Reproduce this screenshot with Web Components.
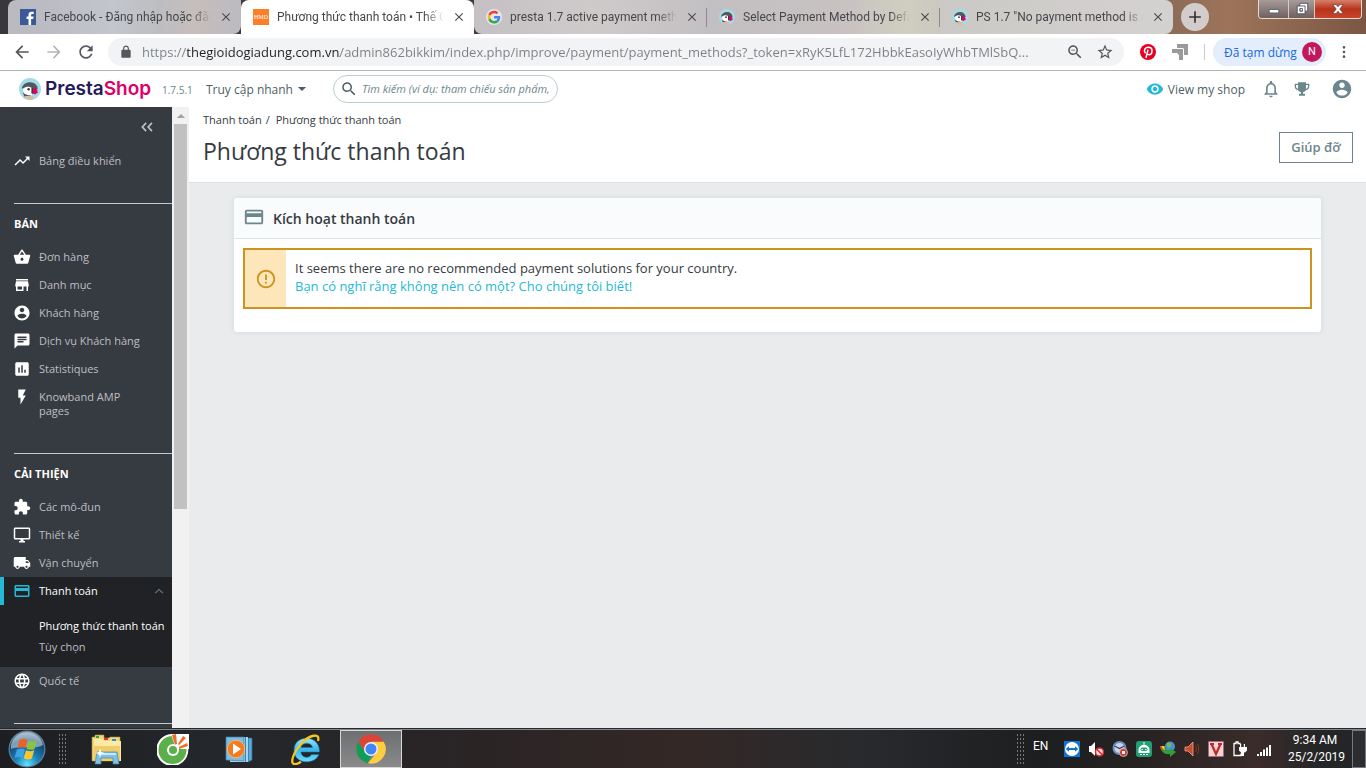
<!DOCTYPE html>
<html lang="vi">
<head>
<meta charset="utf-8">
<title>Phương thức thanh toán • Thế Giới Đồ Gia Dụng</title>
<style>
html, body { height: 100%; margin: 0; }
body { font-family: "Open Sans", "Noto Sans", sans-serif; overflow: hidden; background: #e9ebec; }
</style>
</head>
<body>
<desktop-screen></desktop-screen>
<script>
const P = {
  trend: 'M16 6l2.29 2.29-4.88 4.88-4-4L2 16.59 3.41 18l6-6 4 4 6.3-6.29L22 12V6z',
  basket: 'M17.21 9l-4.38-6.56c-.19-.28-.51-.42-.83-.42-.32 0-.64.14-.83.43L6.79 9H2c-.55 0-1 .45-1 1 0 .09.01.18.04.27l2.54 9.27c.23.84 1 1.46 1.92 1.46h13c.92 0 1.69-.62 1.93-1.46l2.54-9.27L23 10c0-.55-.45-1-1-1h-4.79zM9 9l3-4.4L15 9H9zm3 8c-1.1 0-2-.9-2-2s.9-2 2-2 2 .9 2 2-.9 2-2 2z',
  store: 'M20 4H4v2h16V4zm1 10v-2l-1-5H4l-1 5v2h1v6h10v-6h4v6h2v-6h1zm-9 4H6v-4h6v4z',
  account: 'M12 2C6.48 2 2 6.48 2 12s4.48 10 10 10 10-4.48 10-10S17.52 2 12 2zm0 3c1.66 0 3 1.34 3 3s-1.34 3-3 3-3-1.34-3-3 1.34-3 3-3zm0 14.2c-2.5 0-4.71-1.28-6-3.22.03-1.99 4-3.08 6-3.08 1.99 0 5.97 1.09 6 3.08-1.29 1.94-3.5 3.22-6 3.22z',
  chat: 'M20 2H4c-1.1 0-1.99.9-1.99 2L2 22l4-4h14c1.1 0 2-.9 2-2V4c0-1.1-.9-2-2-2zM6 9h12v2H6V9zm8 5H6v-2h8v2zm4-6H6V6h12v2z',
  stats: 'M19 3H5c-1.1 0-2 .9-2 2v14c0 1.1.9 2 2 2h14c1.1 0 2-.9 2-2V5c0-1.1-.9-2-2-2zM9 17H7v-7h2v7zm4 0h-2V7h2v10zm4 0h-2v-4h2v4z',
  flash: 'M7 2v11h3v9l7-12h-4l4-8z',
  extension: 'M20.5 11H19V7c0-1.1-.9-2-2-2h-4V3.5C13 2.12 11.88 1 10.5 1S8 2.12 8 3.5V5H4c-1.1 0-1.99.9-1.99 2v3.8H3.5c1.49 0 2.7 1.21 2.7 2.7s-1.21 2.7-2.7 2.7H2V20c0 1.1.9 2 2 2h3.8v-1.5c0-1.49 1.21-2.7 2.7-2.7 1.49 0 2.7 1.21 2.7 2.7V22H17c1.1 0 2-.9 2-2v-4h1.5c1.38 0 2.5-1.12 2.5-2.5S21.88 11 20.5 11z',
  desktop: 'M21 2H3c-1.1 0-2 .9-2 2v12c0 1.1.9 2 2 2h7v2H8v2h8v-2h-2v-2h7c1.1 0 2-.9 2-2V4c0-1.1-.9-2-2-2zm0 14H3V4h18v12z',
  truck: 'M20 8h-3V4H3c-1.1 0-2 .9-2 2v11h2c0 1.66 1.34 3 3 3s3-1.34 3-3h6c0 1.66 1.34 3 3 3s3-1.34 3-3h2v-5l-3-4zM6 18.5c-.83 0-1.5-.67-1.5-1.5s.67-1.5 1.5-1.5 1.5.67 1.5 1.5-.67 1.5-1.5 1.5zm13.5-9l1.96 2.5H17V9.5h2.5zm-1.5 9c-.83 0-1.5-.67-1.5-1.5s.67-1.5 1.5-1.5 1.5.67 1.5 1.5-.67 1.5-1.5 1.5z',
  payment: 'M20 4H4c-1.11 0-1.99.89-1.99 2L2 18c0 1.11.89 2 2 2h16c1.11 0 2-.89 2-2V6c0-1.11-.89-2-2-2zm0 14H4v-6h16v6zm0-10H4V6h16v2z',
  globe: 'M11.99 2C6.47 2 2 6.48 2 12s4.47 10 9.99 10C17.52 22 22 17.52 22 12S17.52 2 11.99 2zm6.93 6h-2.95c-.32-1.25-.78-2.45-1.38-3.56 1.84.63 3.37 1.91 4.33 3.56zM12 4.04c.83 1.2 1.48 2.53 1.91 3.96h-3.82c.43-1.43 1.08-2.76 1.91-3.96zM4.26 14C4.1 13.36 4 12.69 4 12s.1-1.36.26-2h3.38c-.08.66-.14 1.32-.14 2 0 .68.06 1.34.14 2H4.26zm.82 2h2.95c.32 1.25.78 2.45 1.38 3.56-1.84-.63-3.37-1.9-4.33-3.56zm2.95-8H5.08c.96-1.66 2.49-2.93 4.33-3.56C8.81 5.55 8.35 6.75 8.03 8zM12 19.96c-.83-1.2-1.48-2.53-1.91-3.96h3.82c-.43 1.43-1.08 2.76-1.91 3.96zM14.34 14H9.66c-.09-.66-.16-1.32-.16-2 0-.68.07-1.35.16-2h4.68c.09.65.16 1.32.16 2 0 .68-.07 1.34-.16 2zm.25 5.56c.6-1.11 1.06-2.31 1.38-3.56h2.95c-.96 1.65-2.49 2.93-4.33 3.56zM16.36 14c.08-.66.14-1.32.14-2 0-.68-.06-1.34-.14-2h3.38c.16.64.26 1.31.26 2s-.1 1.36-.26 2h-3.38z',
  alert: 'M11 15h2v2h-2zm0-8h2v6h-2zm.99-5C6.47 2 2 6.48 2 12s4.47 10 9.99 10C17.52 22 22 17.52 22 12S17.52 2 11.99 2zM12 20c-4.42 0-8-3.58-8-8s3.58-8 8-8 8 3.58 8 8-3.58 8-8 8z',
  eye: 'M12 4.5C7 4.5 2.73 7.61 1 12c1.73 4.39 6 7.5 11 7.5s9.27-3.11 11-7.5c-1.73-4.39-6-7.5-11-7.5zM12 17c-2.76 0-5-2.24-5-5s2.24-5 5-5 5 2.24 5 5-2.24 5-5 5zm0-8c-1.66 0-3 1.34-3 3s1.34 3 3 3 3-1.34 3-3-1.34-3-3-3z',
  bell: 'M12 22c1.1 0 2-.9 2-2h-4c0 1.1.9 2 2 2zm6-6v-5c0-3.07-1.63-5.64-4.5-6.32V4c0-.83-.67-1.5-1.5-1.5s-1.5.67-1.5 1.5v.68C7.64 5.36 6 7.92 6 11v5l-2 2v1h16v-1l-2-2zm-2 1H8v-6c0-2.48 1.51-4.5 4-4.5s4 2.02 4 4.5v6z',
  trophy: 'M6 2h12v2h5v4c0 3.200-2 5.500-5.200 5.900-.9 1.700-2.500 2.700-4.300 3V19h3v3H7.500v-3h3v-2.100c-1.800-.3-3.400-1.300-4.300-3C3 13.500 1 11.200 1 8V4h5zm0 4H3v2c0 1.700.9 3 2.400 3.600L6 11.700zm12 0v5.700l.6-.1C20.100 11 21 9.700 21 8V6z',
  back: 'M20 11H7.83l5.59-5.59L12 4l-8 8 8 8 1.41-1.41L7.83 13H20v-2z',
  forward: 'M12 4l-1.41 1.41L16.17 11H4v2h12.17l-5.58 5.59L12 20l8-8z',
  reload: 'M17.65 6.35C16.2 4.9 14.21 4 12 4c-4.42 0-7.99 3.58-7.99 8s3.57 8 7.99 8c3.73 0 6.84-2.55 7.73-6h-2.08c-.82 2.33-3.04 4-5.65 4-3.31 0-6-2.69-6-6s2.690-6 6-6c1.66 0 3.14.69 4.22 1.78L13 11h7V4l-2.35 2.35z',
  lock: 'M18 8h-1V6c0-2.76-2.24-5-5-5S7 3.24 7 6v2H6c-1.1 0-2 .9-2 2v10c0 1.1.9 2 2 2h12c1.1 0 2-.9 2-2V10c0-1.1-.9-2-2-2zM9 6c0-1.66 1.34-3 3-3s3 1.34 3 3v2H9V6z',
  search: 'M15.5 14h-.79l-.28-.27C15.41 12.59 16 11.11 16 9.5 16 5.91 13.09 3 9.5 3S3 5.910 3 9.5 5.910 16 9.5 16c1.61 0 3.09-.59 4.23-1.570l.27.28v.79l5 4.99L20.49 19l-4.99-5zm-6 0C7.01 14 5 11.990 5 9.5S7.01 5 9.5 5 14 7.01 14 9.5 11.990 14 9.5 14z',
  star: 'M22 9.24l-7.19-.62L12 2 9.19 8.63 2 9.24l5.46 4.73L5.82 21 12 17.27 18.18 21l-1.63-7.03L22 9.24zM12 15.4l-3.76 2.27 1-4.28-3.32-2.88 4.38-.38L12 6.1l1.71 4.04 4.38.38-3.32 2.88 1 4.28L12 15.4z',
  close: 'M19 6.41L17.59 5 12 10.59 6.41 5 5 6.41 10.59 12 5 17.59 6.41 19 12 13.41 17.59 19 19 17.59 13.41 12z',
  plus: 'M19 13h-6v6h-2v-6H5v-2h6V5h2v6h6v2z',
  dots: 'M12 7a2 2 0 100-4 2 2 0 000 4zm0 7a2 2 0 100-4 2 2 0 000 4zm0 7a2 2 0 100-4 2 2 0 000 4z',
  up: 'M12 8l-7 7 1.200 1.200L12 10.400l5.800 5.800L19 15z',
  caret: 'M2 7h20L12 17z',
  collapse: 'M11.500 6L9.500 4 2 12l7.500 8 2-2L6 12zM21.500 6l-2-2L12 12l7.500 8 2-2L16 12z'
};
P.zoomout = P.search + 'M7 9h5v1H7z';

/* Multi-colour artwork: [viewBox size, markup] */
const ART = {
  facebook: [16, '<path fill="#3b5998" d="M0 0h16v16H0z"/><path fill="#fff" d="M8.500 16v-6H6.600V7.600h1.900V6c0-2.200 1.100-3.300 3.200-3.300h2V5h-1.400c-.9 0-1.200.4-1.200 1.200v1.400h2.500l-.4 2.400h-2.100v6z"/>'],
  google: [48, '<circle cx="24" cy="24" r="24" fill="#e8e6e8"/><g transform="translate(5 5) scale(.8)"><path fill="#EA4335" d="M24 9.500c3.540 0 6.710 1.220 9.210 3.600l6.850-6.850C35.900 2.380 30.470 0 24 0 14.620 0 6.510 5.380 2.560 13.220l7.980 6.190C12.430 13.720 17.740 9.500 24 9.500z"/><path fill="#4285F4" d="M46.980 24.550c0-1.570-.15-3.090-.38-4.550H24v9.020h12.940c-.58 2.960-2.260 5.480-4.780 7.180l7.730 6c4.510-4.180 7.090-10.360 7.090-17.650z"/><path fill="#FBBC05" d="M10.530 28.590c-.48-1.450-.76-2.990-.76-4.590s.27-3.140.76-4.590l-7.980-6.190C.92 16.460 0 20.120 0 24c0 3.880.92 7.540 2.560 10.780l7.970-6.190z"/><path fill="#34A853" d="M24 48c6.480 0 11.930-2.130 15.890-5.810l-7.730-6c-2.150 1.450-4.920 2.300-8.160 2.300-6.260 0-11.570-4.220-13.470-9.910l-7.980 6.190C6.510 42.620 14.620 48 24 48z"/></g>'],
  puffin: [24, '<circle cx="12" cy="12" r="12" fill="#a4dbe8"/><path fill="#55565b" d="M3 11c1-4 4.500-6.500 9-6.500 5 0 8 3 8.500 7.500L17 13 5 12z"/><path fill="#fff" d="M4.500 11.500c3-2.500 7-2.500 9.500-.5 1.500 2 1 5 0 8l-6 1c-3-2-4-5-3.500-8.500z"/><path fill="#5a5552" d="M4 15c2 3 5 4 9 4l-1 2H6z"/><path fill="#d4bda0" d="M6 19.500h9l1 3.600A12 12 0 016 22z"/><circle cx="10.500" cy="12.300" r="1.300" fill="#333"/><path fill="#363a41" d="M13.500 10.500c1.500 0 2.500 1 2.500 3l-1 4-1.500-1z"/><path fill="#df0067" d="M15.500 10.500c3 0 5 2 5 6-1.500-.5-1.500.5-3 1.500l-2.500-1z"/>'],
  pinterest: [24, '<circle cx="12" cy="12" r="12" fill="#e60023"/><path fill="none" stroke="#fff" stroke-width="2.300" stroke-linecap="round" d="M11.800 9.500l-2.600 10.500M7.800 13.200C5 9 8 5 12.500 5c3.500 0 5.500 2.300 5.500 5 0 3.500-2 6-4.500 6-1.500 0-2.500-.7-3-2"/>'],
  arrows: [16, '<path fill="#9a9a9a" d="M5 0h11v11h-4V6L10 4H5zM0 5h11v11H7v-5L5 9H0z"/><path fill="#fff" d="M4.500 4H11l1 1v6.500h-1V5H4.500z"/>'],
  start: [38, '<defs><radialGradient id="o" cx=".5" cy=".95" r=".95"><stop offset="0" stop-color="#5fe3fb"/><stop offset=".35" stop-color="#1b83bd"/><stop offset=".75" stop-color="#14456f"/><stop offset="1" stop-color="#8fa7b8"/></radialGradient></defs><circle cx="19" cy="19" r="18.500" fill="#5f7f95"/><circle cx="19" cy="19" r="17.300" fill="url(#o)"/><path fill="#d5e4ee" opacity=".55" d="M3 15a16.500 16.500 0 0132 0c-8 5-22 0-32 4z"/><path fill="#e8622a" d="M11.500 10c3-1.600 5.500-1.400 8 0l-2.200 8.300c-2.500-1.400-5-1.600-8 0z"/><path fill="#8ac43f" d="M20.600 10.600c3 1.400 5.500 1.400 8.200 0l-2.300 8.300c-2.800 1.400-5.200 1.200-8-.2z"/><path fill="#3aa5e4" d="M8.900 19.600c3-1.400 5.500-1.400 8 0L14.600 28c-2.500-1.400-5-1.400-8 0z"/><path fill="#fbc72c" d="M18 20.200c2.800 1.400 5.200 1.400 8.200 0l-2.300 8.300c-3 1.400-5.400 1.200-8.200-.2z"/>'],
  explorer: [32, '<path fill="#f3d77a" stroke="#a98a35" stroke-width=".6" d="M1 4h3V2h9v3h5l1-1h10v24H1z"/><path fill="#28a745" d="M5 3h3v2H5z"/><path fill="#d33" d="M13 5h4v2h-4z"/><path fill="#2c8be0" d="M21 6h4v2h-4z"/><path fill="#fbe9a6" d="M3 6h8l2 2h17v20H3z"/><path fill="#f0cd69" d="M3 13h26v15H3z"/><path fill="#7fc1e6" stroke="#3a86b4" stroke-width=".7" d="M6 19h20l2 12h-6v-6H10v6H4z"/><path fill="#c8e9fa" d="M7 20h18v2H7z"/><path fill="#fff" d="M9 15l1 4 4 1-4 1-1 4-1-4-4-1 4-1z"/>'],
  coccoc: [32, '<path fill="#fff" d="M16 1h15v13a16 16 0 11-15-13z"/><circle cx="15.500" cy="17" r="14" fill="#5bb04c"/><path fill="#fff" d="M14 1h18v15H19z"/><path fill="#f26a2a" d="M15 2l4-1 1 10-2 1zM21 11l5-8 3 2-7 7zM22 14l8-4 1 3-9 3z"/><circle cx="16" cy="17" r="6" fill="#fff"/><circle cx="16" cy="17" r="4" fill="#5bb04c"/>'],
  wmp: [28, '<path fill="#5fa9d4" stroke="#2c6c96" stroke-width=".7" d="M9 3h18v22l-4 2V4z"/><path fill="#a7d7ef" d="M5 2h18v25H5z"/><path fill="#3b86b8" d="M20 2h1v25h-1zM23 3h1v23h-1z"/><path fill="#7ebbe0" stroke="#3d7fa8" stroke-width=".7" d="M1 2h18v24l-18-1z"/><circle cx="11" cy="14" r="8.700" fill="#f47a20" stroke="#fbb76c"/><path fill="#fff" d="M8 8.500v11l8-5.500z"/>'],
  ie: [32, '<defs><linearGradient id="e" x2="0" y2="1"><stop stop-color="#9be9fd"/><stop offset=".5" stop-color="#38b5ee"/><stop offset="1" stop-color="#6fdcf8"/></linearGradient></defs><path fill="url(#e)" stroke="#156f9f" stroke-width=".6" d="M30.500 19H12c.3 6 8.500 7 10.500 2.500h7.300C27 31.500 5 32.500 5 17 5 1 31 1 30.500 19zM12 14.500h11.500c-.5-5.500-11-5.500-11.500 0z"/><path fill="none" stroke="#f6c51f" stroke-width="2.300" d="M29 8c2.500-9-9-6-17 3-8 9-11 19-7 20 2 .5 4.500-.6 7-2.300"/>'],
  chrome: [48, '<path fill="#db4437" d="M24 2a22 22 0 0119.100 11H24l-8.700 16L4.900 13A22 22 0 0124 2z"/><path fill="#0f9d58" d="M4.900 13l10.400 16L24 34l-4.700 11.500A22 22 0 014.900 13z"/><path fill="#ffcd40" d="M43.100 13A22 22 0 0119.300 45.500L33 29c2-6-1-12-9-16z"/><circle cx="24" cy="24" r="10.500" fill="#f1f1f1"/><circle cx="24" cy="24" r="8.300" fill="#4285f4"/>'],
  teamviewer: [16, '<path fill="#0e74d8" d="M0 0h16v16H0z"/><circle cx="8" cy="8" r="7" fill="#fff"/><path fill="#0e74d8" d="M1.800 8L5 5.300V7h6V5.300L14.200 8 11 10.700V9H5v1.700z"/>'],
  muted: [16, '<path fill="#fff" d="M1 5h2l4-4v14l-4-4H1z"/><circle cx="11.500" cy="11" r="4" fill="#f2e6e6" stroke="#e0252b" stroke-width="1.500"/><path stroke="#e0252b" stroke-width="1.500" d="M8.800 8.200l5.400 5.600"/>'],
  clockstop: [16, '<circle cx="7.500" cy="7" r="6" fill="#c9d4e8" stroke="#6f8cc0" stroke-width="2"/><path fill="none" stroke="#2c3f66" stroke-width="1.300" d="M2.500 5l5 2.500L12.500 5"/><circle cx="11.500" cy="11.500" r="4" fill="#c93a32" stroke="#f1d2cf" stroke-width=".7"/><path fill="#fff" d="M10 10h3v3h-3z"/>'],
  robot: [16, '<rect width="16" height="16" rx="3" fill="#20a074"/><path fill="#fff" d="M7.500 1h1v3a5 5 0 015 5v3h-11V9a5 5 0 015-5z"/><rect x="4.500" y="6.500" width="7" height="3.500" rx="1.700" fill="#20a074"/><path fill="#fff" d="M5.500 8h1.500v1H5.500zM9 8h1.500v1H9zM4 13h2v1H4zM7 13h2v1H7zM10 13h2v1h-2z"/>'],
  idm: [16, '<circle cx="10" cy="5.500" r="5" fill="#4b8fd6"/><path fill="#6cc04a" d="M7 2c3-1 5 1 4 3s-3 2-4 0z"/><path fill="#2f9e3b" d="M0 5h5l1 4h5l-1-2 6 4-6 5v-3C5 14 1 11 0 5z"/><path fill="#f3d226" d="M1 5h3l1 4c-2-.5-3-2-4-4z"/><path fill="#d9482b" d="M0 5h1.500c.5 2 1 3 2.500 4l-1.500 1C1 8.500.3 7 0 5z"/>'],
  speaker: [16, '<path fill="#c94c30" stroke="#f0a58c" stroke-width=".8" d="M1 6h3l5-5v14l-5-5H1z"/><path fill="none" stroke="#8c3421" d="M11.500 5c1 2 1 4 0 6M13.500 3c1.500 3 1.500 7 0 10"/>'],
  vkey: [16, '<path fill="#f1d6d6" stroke="#c48" stroke-opacity=".4" d="M.5.5h15v15H.5z"/><path fill="none" stroke="#c0272d" stroke-width="2.200" d="M3.500 3L8 13l4.500-10M2 3h4M10 3h4"/>'],
  plug: [16, '<path fill="none" stroke="#fff" stroke-width="1.300" d="M8 3.500V2.500H6V1H4v1.500H2v12h7v-2"/><path fill="#fff" d="M8 6V3h1.200v3h2.600V3H13v3h2v3.500l-2 2h-1V15H9v-3.500l-2-2V6z"/>'],
  signal: [16, '<path fill="#fff" d="M1 13h2v2H1zM4 11h2v4H4zM7 8.500h2V15H7zM10 6.500h2V15h-2zM13 4h2v11h-2z"/>'],
  min: [16, '<path fill="#fff" stroke="#555a6b" d="M2.500 8.500h11v4h-11z"/>'],
  restore: [16, '<path fill="#fff" stroke="#4a4d5b" d="M5.500 1.500h9v9h-9z"/><path fill="#fff" stroke="#4a4d5b" fill-rule="evenodd" d="M2.500 4.500h9v9h-9zM5.500 7.500v3h3v-3z"/>'],
  winclose: [16, '<path fill="#fff" stroke="#5b4040" stroke-width=".8" d="M2 3h4l2 2.500L10 3h4l-4 5 4 5h-4l-2-2.500L6 13H2l4-5z"/>']
};

/* Base element: puts its class's styles and markup into an open shadow root. */
class View extends HTMLElement {
  connectedCallback() {
    if (this.shadowRoot) return;
    const t = document.createElement('template');
    t.innerHTML = `<style>*{box-sizing:border-box}button{font:inherit;color:inherit;background:none;border:0;padding:0;margin:0}a{color:inherit;text-decoration:none}${this.css()}</style>${this.html()}`;
    this.attachShadow({ mode: 'open' }).append(t.content.cloneNode(true));
  }
  css() { return ''; }
  html() { return '<slot></slot>'; }
  a(name) { return this.getAttribute(name) || ''; }
}
const define = (name, cls) => customElements.define(name, cls);

define('ui-icon', class extends View {
  css() { const s = this.a('size') || 16; return `:host{display:block;flex:none;width:${s}px;height:${s}px}svg{display:block;width:100%;height:100%}`; }
  html() {
    const n = this.a('name');
    return ART[n] ? `<svg viewBox="0 0 ${ART[n][0]} ${ART[n][0]}" aria-hidden="true">${ART[n][1]}</svg>`
      : `<svg viewBox="0 0 24 24" fill="currentColor" fill-rule="evenodd" aria-hidden="true"><path d="${P[n]}"/></svg>`;
  }
});

define('browser-tab', class extends View {
  css() { return `
    :host{display:flex;align-items:center;flex:0 1 233px;min-width:0;height:34px;padding:0 8px 0 12px;gap:8px;font-family:Roboto,sans-serif;font-size:12px;color:#45474b;background:var(--tab,#c4c0c4);position:relative}
    :host([first]){border-radius:8px 0 8px 0}
    :host([active]){background:#fff;border-radius:8px 8px 0 0}
    :host([after]){border-radius:0 0 0 8px}
    :host([last]){border-radius:0 8px 8px 0}
    :host([divided])::after{content:"";position:absolute;right:0;top:8px;width:1px;height:19px;background:#8f8b8c}
    span{flex:1;min-width:0;overflow:hidden;white-space:nowrap;line-height:20px;-webkit-mask-image:linear-gradient(90deg,#000 calc(100% - 20px),transparent)}
    button{color:#4a4c50}`; }
  html() { return `<slot name="icon"><ui-icon name="${this.a('icon')}"></ui-icon></slot><span><slot></slot></span><button aria-label="Đóng thẻ"><ui-icon name="close" size="14"></ui-icon></button>`; }
});

define('window-controls', class extends View {
  css() { return `
    :host{display:flex;align-self:flex-start;height:19px;border:1px solid #e6d9cf;border-top:0;border-radius:0 0 4px 4px;overflow:hidden;background:#8e8280}
    button{width:29px;display:grid;place-items:center;background:linear-gradient(#a79c9a,#6f605c)}
    button+button{border-left:1px solid #d6c9c0;width:26px}
    button.x{width:47px;background:linear-gradient(#d6806a,#b8331c 50%,#c8442a)}`; }
  html() { return `<button aria-label="Thu nhỏ"><ui-icon name="min" size="14"></ui-icon></button><button aria-label="Khôi phục"><ui-icon name="restore" size="14"></ui-icon></button><button class="x" aria-label="Đóng"><ui-icon name="winclose" size="14"></ui-icon></button>`; }
});

define('tab-strip', class extends View {
  css() { return `
    :host{display:flex;align-items:center;height:34px;padding:0 4px 0 8px;background:linear-gradient(90deg,#38383c 0,#453b3c 35%,#6a4c42 55%,#9a8568 69%,#8a6a58 85%,#9d7459 90%,#7b5644 100%)}
    .hmd{width:16px;height:16px;background:#ff7f27;color:#fff;font:6px/16px "Liberation Serif",serif;text-align:center;flex:none}
    .add{flex:none;display:grid;place-items:center;width:28px;height:28px;border-radius:14px;margin-left:8px;background:#d2cdcc;color:#333}
    window-controls{margin-left:auto}`; }
  html() { return `
    <browser-tab icon="facebook" first style="--tab:linear-gradient(90deg,#b9b9bf,#bcbcc6 20%,#c3c6cc 45%,#bdbdc1 65%,#c6bebc 80%,#bcbac0)">Facebook - Đăng nhập hoặc đăng ký</browser-tab>
    <browser-tab active><div slot="icon" class="hmd">HMD</div>Phương thức thanh toán • Thế Giới</browser-tab>
    <browser-tab icon="google" after divided style="--tab:linear-gradient(90deg,#c4c0c3,#cfcaca 50%,#c3c0c3)">presta 1.7 active payment methods</browser-tab>
    <browser-tab icon="puffin" divided style="--tab:linear-gradient(90deg,#c2bfc2,#c8c2c1 60%,#cfcfc0 85%,#cbc8c0)">Select Payment Method by Default</browser-tab>
    <browser-tab icon="puffin" last style="--tab:linear-gradient(90deg,#cbc9c5,#d4d1d1)">PS 1.7 "No payment method is available</browser-tab>
    <button class="add" aria-label="Thẻ mới"><ui-icon name="plus" size="20"></ui-icon></button>
    <window-controls></window-controls>`; }
});

define('address-bar', class extends View {
  css() { return `
    :host{display:flex;align-items:center;gap:16px;flex:none;height:37px;padding:0 14px 0 12px;background:#fff;border-bottom:1px solid #b4b4b4;color:#54575b}
    .nav{display:flex;gap:12px}.nav .off{color:#b5b7b9}
    .box{display:flex;align-items:center;flex:1;min-width:0;height:28px;border-radius:14px;background:#f1f3f4;padding:0 10px 0 11px;gap:12px;margin-left:-4px}
    .box label{display:flex;align-items:center;flex:1;min-width:0;gap:9px}
    input{flex:1;min-width:0;height:24px;border:0;padding:0;outline:0;font:13px/24px "Open Sans","Noto Sans",sans-serif;color:transparent;background:linear-gradient(90deg,#7b7f84 45px,#202124 45px,#202124 198px,#7b7f84 198px);-webkit-background-clip:text;background-clip:text}
    .rule{width:1px;height:16px;background:#c8cacd}
    .sync{display:flex;align-items:center;justify-content:space-between;width:113px;height:28px;padding:0 4px 0 11px;border-radius:14px;background:#e3edfc;color:#1a68e0;font-size:12px;margin:0 -6px 0 -8px;white-space:nowrap}
    .sync b{width:20px;height:20px;border-radius:10px;background:#c2185b;color:#fff;font:11px/20px Roboto,sans-serif;text-align:center}`; }
  html() { return `
    <div class="nav"><button aria-label="Quay lại"><ui-icon name="back" size="20"></ui-icon></button><button class="off" aria-label="Tiến"><ui-icon name="forward" size="20"></ui-icon></button><button aria-label="Tải lại"><ui-icon name="reload" size="20"></ui-icon></button></div>
    <div class="box"><label><ui-icon name="lock" size="14"></ui-icon><input aria-label="Địa chỉ" value="https://thegioidogiadung.com.vn/admin862bikkim/index.php/improve/payment/payment_methods?_token=xRyK5LfL172HbbkEasoIyWhbTMlSbQ..."></label>
      <button aria-label="Thu phóng"><ui-icon name="zoomout" size="18"></ui-icon></button><button aria-label="Dấu trang"><ui-icon name="star" size="18"></ui-icon></button></div>
    <ui-icon name="pinterest"></ui-icon><ui-icon name="arrows"></ui-icon><div class="rule"></div>
    <button class="sync"><span>Đã tạm dừng</span><b>N</b></button>
    <button aria-label="Trình đơn"><ui-icon name="dots"></ui-icon></button>`; }
});

define('shop-header', class extends View {
  css() { return `
    :host{display:flex;align-items:center;flex:none;height:36px;padding:0 13px 0 19px;background:#fff;color:#4e5f66;font-size:12px;white-space:nowrap}
    .logo{display:flex;align-items:center;gap:4px;font:600 19px/28px Inter,sans-serif;color:#251b5b;width:133px}
    .logo em{font-style:normal;color:#df0067}
    small{font-size:10px;width:44px;padding-left:10px;color:#6c868e;line-height:20px;padding-top:2px}
    .quick{display:flex;align-items:center;gap:4px;width:137px;padding-left:10px}
    .search{display:flex;align-items:center;gap:4px;width:225px;height:28px;padding:0 6px;border:1px solid #bbcdd2;border-radius:14px;color:#4e5f66}
    input{flex:1;min-width:0;border:0;outline:0;padding:0;background:none;font:italic 11px/20px "Open Sans",sans-serif}
    input::placeholder{color:#6c868e;opacity:1}
    .shop{display:flex;align-items:center;gap:4px;margin-left:auto;margin-right:16px}
    .shop ui-icon{color:#25b9d7}
    .icons{display:flex;align-items:center;color:#6c868e}
    .icons button:nth-child(2){margin:0 21px 0 13px}`; }
  html() { return `
    <a href="#" class="logo"><ui-icon name="puffin" size="22"></ui-icon><span>Presta<em>Shop</em></span></a><small>1.7.5.1</small>
    <button class="quick">Truy cập nhanh<ui-icon name="caret" size="10"></ui-icon></button>
    <label class="search"><ui-icon name="search" size="18"></ui-icon><input type="text" aria-label="Tìm kiếm" placeholder="Tìm kiếm (ví dụ: tham chiếu sản phẩm, tên"></label>
    <a href="#" class="shop"><ui-icon name="eye" size="18"></ui-icon>View my shop</a>
    <div class="icons"><button aria-label="Thông báo"><ui-icon name="bell" size="20"></ui-icon></button><button aria-label="Thành tích"><ui-icon name="trophy"></ui-icon></button><button aria-label="Tài khoản"><ui-icon name="account" size="22"></ui-icon></button></div>`; }
});

define('nav-item', class extends View {
  css() { return `
    :host{display:block;color:#bebfc1;font-size:11px;line-height:14px}
    a{display:flex;gap:8px;padding:7px 6px 7px 13px}
    ui-icon{color:#fff;margin:-2px 0}
    span{flex:1;max-width:110px}
    :host([active]){background:#202226;color:#fff}
    :host([active]) a{border-left:4px solid #25b9d7;padding-left:9px}
    :host([active]) ui-icon{color:#25b9d7}
    :host([active]) ui-icon.up{color:#6c868e;margin:0}
    :host([active]) span{max-width:none}`; }
  html() { return `<a href="#"><ui-icon name="${this.a('icon')}" size="18"></ui-icon><span><slot></slot></span>${this.hasAttribute('active') ? '<ui-icon class="up" name="up" size="14"></ui-icon>' : ''}</a><slot name="sub"></slot>`; }
});

define('nav-group', class extends View {
  css() { return `
    :host{display:block;padding-bottom:28px}
    h2{margin:0 0 0 14px;border-top:1px solid #bbcdd2;font-size:11px;font-weight:700;line-height:40px;height:40px;color:#fff}`; }
  html() { return `${this.a('label') ? `<h2>${this.a('label')}</h2>` : ''}<slot></slot>`; }
});

define('side-nav', class extends View {
  css() { return `
    :host{display:flex;flex:none;width:189px;background:#363a41;overflow:hidden}
    nav{flex:1;min-width:0}
    .fold{display:flex;justify-content:flex-end;align-items:center;width:100%;height:40px;padding-right:18px;color:#bebfc1}
    .sub{display:flex;flex-direction:column;padding:10px 0 10px 39px;line-height:21px;white-space:nowrap;color:#bebfc1}
    .sub .on{color:#fff}
    .bar{width:17px;background:#f1f1f1;display:flex;flex-direction:column;align-items:center}
    .bar ui-icon{color:#a3a3a3;transform:rotate(180deg);margin:4px 0 3px}
    .thumb{width:13px;flex:0 0 62%;background:#c1c1c1}
    hr{margin:0 0 0 14px;border:0;border-top:1px solid #bbcdd2}`; }
  html() { return `
    <nav><button class="fold" aria-label="Thu gọn"><ui-icon name="collapse" size="14"></ui-icon></button>
      <nav-group><nav-item icon="trend">Bảng điều khiển</nav-item></nav-group>
      <nav-group label="BÁN"><nav-item icon="basket">Đơn hàng</nav-item><nav-item icon="store">Danh mục</nav-item><nav-item icon="account">Khách hàng</nav-item><nav-item icon="chat">Dịch vụ Khách hàng</nav-item><nav-item icon="stats">Statistiques</nav-item><nav-item icon="flash">Knowband AMP<br>pages</nav-item></nav-group>
      <nav-group label="CẢI THIỆN"><nav-item icon="extension">Các mô-đun</nav-item><nav-item icon="desktop">Thiết kế</nav-item><nav-item icon="truck">Vận chuyển</nav-item>
        <nav-item icon="payment" active>Thanh toán<div slot="sub" class="sub"><a href="#" class="on">Phương thức thanh toán</a><a href="#">Tùy chọn</a></div></nav-item>
        <nav-item icon="globe">Quốc tế</nav-item></nav-group><hr></nav>
    <div class="bar"><ui-icon name="caret" size="10"></ui-icon><div class="thumb"></div></div>`; }
});

define('page-heading', class extends View {
  css() { return `
    :host{display:flex;justify-content:space-between;align-items:flex-start;height:76px;padding:0 13px 0 14px;background:#fff;border-bottom:1px solid #dddfe1;color:#363a41}
    .crumbs{display:flex;gap:4px;font-size:11px;line-height:16px;padding-top:5px}
    .crumbs a:last-child{margin-left:2px}
    h1{margin:0;padding-top:6px;font-size:23px;font-weight:400;line-height:34px}
    button{margin-top:25px;width:74px;height:31px;padding-bottom:2px;border:1px solid #6c868e;color:#6c868e;font-size:13px;font-weight:600;white-space:nowrap}`; }
  html() { return `<div><div class="crumbs"><a href="#">Thanh toán</a><span>/</span><a href="#">Phương thức thanh toán</a></div><h1>Phương thức thanh toán</h1></div><button>Giúp đỡ</button>`; }
});

define('alert-box', class extends View {
  css() { return `
    :host{display:flex;border:2px solid #cd9321;background:#fff;font-size:13px;line-height:18px;color:#363a41}
    .mark{display:grid;place-items:center;width:41px;background:#fde6b9;color:#cd9321}
    .text{padding:9px 9px 12px}`; }
  html() { return `<div class="mark"><ui-icon name="alert" size="22"></ui-icon></div><div class="text"><slot></slot></div>`; }
});

define('panel-card', class extends View {
  css() { return `
    :host{display:block;background:#fff;border:1px solid #dbe6e9;border-radius:4px;overflow:hidden;box-shadow:0 0 4px rgba(54,90,100,.08)}
    h3{display:flex;align-items:center;gap:8px;margin:0;height:41px;padding:0 9px;background:#fafbfc;border-bottom:1px solid #dbe6e9;font-size:14px;font-weight:600;color:#363a41}
    ui-icon{color:#6c868e;margin-bottom:3px}
    .body{padding:9px 9px 23px}`; }
  html() { return `<h3><ui-icon name="payment" size="22"></ui-icon>${this.a('label')}</h3><div class="body"><slot></slot></div>`; }
});

define('shop-content', class extends View {
  css() { return `:host{display:block;flex:1;min-width:0;background:#e9ebec}main{padding:14px 44px 0}panel-card a{color:#25b9d7}`; }
  html() { return `<page-heading></page-heading><main><panel-card label="Kích hoạt thanh toán"><alert-box>It seems there are no recommended payment solutions for your country.<br><a href="#">Bạn có nghĩ rằng không nên có một? Cho chúng tôi biết!</a></alert-box></panel-card></main>`; }
});

define('task-bar', class extends View {
  css() { return `
    :host{display:flex;align-items:center;flex:none;height:40px;padding-left:8px;border-top:1px solid #26292d;box-shadow:inset 0 1px #85888b;background:linear-gradient(90deg,#1c1e21 0,#24272b 16%,#2a2425 35%,#342826 50%,#282a2d 63%,#1c1e20 76%,#272322 84%,#3a2c2a 92%,#232527 97%);color:#fff;font-size:12px}
    .grip{width:8px;height:32px;background:radial-gradient(circle,#777 1px,transparent 1px) 0 0/3px 4px;margin-left:12px}
    .grip.end{margin-left:auto}
    .apps{display:flex;gap:4px;margin-left:10px}
    .apps button{display:grid;place-items:center;width:62px;height:38px}
    .apps .on{background:linear-gradient(#6d6f71,#8a8a8a);border:1px solid #d7d7d7}
    .tray{display:flex;gap:8px;margin:0 16px 0 15px}
    .lang{margin-left:9px;padding-bottom:6px;width:16px}
    .clock{width:54px;margin-right:10px;text-align:center;line-height:17px;white-space:nowrap}
    .lang,.clock{font-family:Roboto,sans-serif}
    .show{width:14px;height:38px;border:1px solid #77797c;background:#2b2d30}`; }
  html() { return `
    <button aria-label="Start"><ui-icon name="start" size="38"></ui-icon></button><div class="grip"></div>
    <div class="apps"><button aria-label="Explorer"><ui-icon name="explorer" size="32"></ui-icon></button><button aria-label="Cốc Cốc"><ui-icon name="coccoc" size="32"></ui-icon></button><button aria-label="Media Player"><ui-icon name="wmp" size="28"></ui-icon></button><button aria-label="Internet Explorer"><ui-icon name="ie" size="32"></ui-icon></button><button class="on" aria-label="Chrome"><ui-icon name="chrome" size="32"></ui-icon></button></div>
    <div class="grip end"></div><span class="lang">EN</span>
    <div class="tray">${['teamviewer', 'muted', 'clockstop', 'robot', 'idm', 'speaker', 'vkey', 'plug', 'signal'].map(n => `<ui-icon name="${n}"></ui-icon>`).join('')}</div>
    <div class="clock"><div>9:34 AM</div><div>25/2/2019</div></div><button class="show" aria-label="Show desktop"></button>`; }
});

define('desktop-screen', class extends View {
  css() { return `:host{display:flex;flex-direction:column;height:100vh}.work{display:flex;flex:1;min-height:0}`; }
  html() { return `<tab-strip></tab-strip><address-bar></address-bar><shop-header></shop-header><div class="work"><side-nav></side-nav><shop-content></shop-content></div><task-bar></task-bar>`; }
});
</script>
</body>
</html>
